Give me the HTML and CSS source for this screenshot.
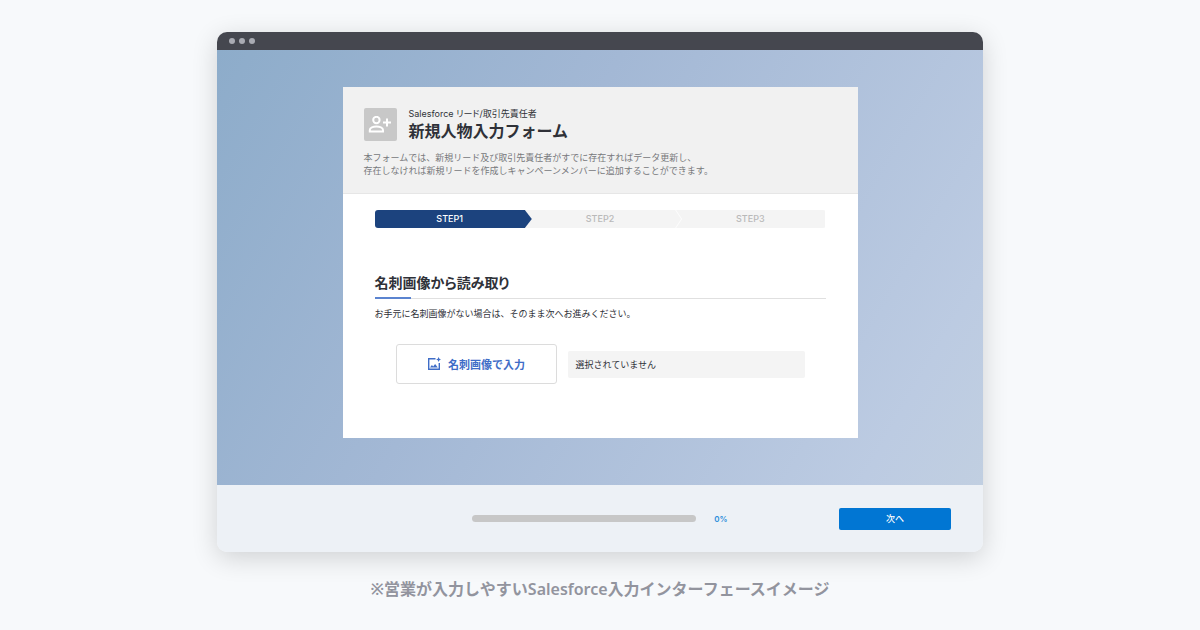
FILE: index.html
```html
<!DOCTYPE html>
<html lang="ja">
<head>
  <meta charset="UTF-8">
  <meta name="viewport" content="width=device-width, initial-scale=1.0">
  <title>新規人物入力フォーム</title>
  <link rel="stylesheet" href="styles.css">
</head>
<body>
  <figure class="figure">
    <div class="window">
      <div class="window-bar">
        <span class="dot"></span>
        <span class="dot"></span>
        <span class="dot"></span>
      </div>

      <main class="stage">
        <section class="card">
          <header class="card-head">
            <div class="title-row">
              <div class="title-icon">
                <svg viewBox="0 0 24 18" width="24" height="18" fill="none" stroke="#fff" stroke-width="2" aria-hidden="true">
                  <circle cx="8.4" cy="4" r="3.2"/>
                  <path d="M1.8 15.4v-1.3c0-2.2 3.4-3.5 6.6-3.5s6.6 1.3 6.6 3.5v1.3z"/>
                  <path d="M19 2.6v8M15 6.6h8"/>
                </svg>
              </div>
              <div>
                <p class="sub-title">Salesforce リード/取引先責任者</p>
                <h1 class="title">新規人物入力フォーム</h1>
              </div>
            </div>
            <p class="lead">本フォームでは、新規リード及び取引先責任者がすでに存在すればデータ更新し、<br>存在しなければ新規リードを作成しキャンペーンメンバーに追加することができます。</p>
          </header>

          <div class="card-body">
            <ol class="steps">
              <li class="step current" aria-current="step">STEP1</li>
              <li class="step">STEP2</li>
              <li class="step">STEP3</li>
            </ol>

            <h2 class="section-title">名刺画像から読み取り</h2>
            <p class="note">お手元に名刺画像がない場合は、そのまま次へお進みください。</p>

            <div class="upload">
              <button type="button" class="upload-button" id="upload">
                <svg viewBox="0 0 14 14" width="14" height="14" aria-hidden="true">
                  <path d="M8.5 1.7H1.7v10.6h10.6V6" fill="none" stroke="#3f6dc7" stroke-width="1.4"/>
                  <path d="M3 10.6l1.9-2.5 1.3 1.5 1.9-2.5 2.7 3.5z" fill="#3f6dc7"/>
                  <path d="M11.6 0l.8 1.8 1.6.7-1.6.8-.8 1.7-.8-1.7-1.7-.8 1.7-.7z" fill="#3f6dc7"/>
                </svg>
                名刺画像で入力
              </button>
              <output class="file-name" for="upload">選択されていません</output>
            </div>
          </div>
        </section>
      </main>

      <footer class="window-foot">
        <div class="progress-box">
          <progress class="progress" id="progress" value="0" max="100" aria-label="進捗"></progress>
          <label class="percent" for="progress">0%</label>
        </div>
        <button type="button" class="next-button">次へ</button>
      </footer>
    </div>
    <figcaption class="caption">※営業が入力しやすいSalesforce入力インターフェースイメージ</figcaption>
  </figure>
</body>
</html>
```
FILE: styles.css
```css
* {
  box-sizing: border-box;
}

body {
  margin: 0;
  background: #f7f9fb;
  color: #2f3138;
  font-family: Inter, "Noto Sans CJK JP", sans-serif;
}

h1, h2, p, ol, figure {
  margin: 0;
  padding: 0;
}

button {
  font: inherit;
  cursor: pointer;
}

.figure {
  padding: 32px 16px 24px;
}

.window {
  max-width: 766px;
  margin: 0 auto;
  border-radius: 10px;
  overflow: hidden;
  box-shadow: 0 6px 26px rgba(0, 0, 0, 0.16);
}

.window-bar {
  display: flex;
  align-items: center;
  gap: 4px;
  height: 18px;
  padding-left: 12px;
  background: #45474f;
}

.dot {
  width: 6px;
  height: 6px;
  border-radius: 50%;
  background: #a9abb3;
}

.stage {
  padding: 37px 16px 47px;
  background: linear-gradient(120deg, #8dacca, #a3b8d5 40%, #bccbe2 88%, #c1cfe1);
}

.card {
  max-width: 515px;
  margin: 0 auto;
  background: #fff;
}

.card-head {
  padding: 20px 21px 16px;
  border-bottom: 1px solid #e6e6e6;
  background: #f1f1f1;
}

.title-row {
  display: flex;
  align-items: center;
  gap: 12px;
}

.title-icon {
  display: flex;
  align-items: center;
  justify-content: center;
  width: 33px;
  height: 33px;
  border-radius: 2px;
  background: #c8c8c8;
}

.sub-title {
  font-size: 9px;
  line-height: 13px;
  font-feature-settings: "palt";
}

.title {
  font-size: 16px;
  line-height: 22px;
}

.lead {
  margin-top: 9px;
  color: #77787b;
  font-size: 9px;
  line-height: 13px;
}

.card-body {
  padding: 16px 32px 54px;
}

.steps {
  display: flex;
  border-radius: 3px;
  overflow: hidden;
  list-style: none;
}

.step {
  position: relative;
  flex: 1;
  background: #f4f4f4;
  color: #b9b9b9;
  font-size: 9px;
  font-weight: 500;
  line-height: 18px;
  text-align: center;
}

/* thin chevron between two steps */
.step:not(:last-child)::after {
  content: "";
  position: absolute;
  top: 0;
  left: 100%;
  z-index: 1;
  width: 7px;
  height: 100%;
  background: #fdfdfd;
  clip-path: polygon(0 0, 1px 0, 100% 50%, 1px 100%, 0 100%, 6px 50%);
}

.step.current {
  background: #1c437e;
  color: #fff;
}

.step.current::after {
  background: #1c437e;
  clip-path: polygon(0 0, 100% 50%, 0 100%);
}

.section-title {
  position: relative;
  margin-top: 45px;
  padding-bottom: 5px;
  border-bottom: 1px solid #e0e0e0;
  font-size: 14px;
  line-height: 20px;
  font-feature-settings: "palt";
}

.section-title::after {
  content: "";
  position: absolute;
  bottom: -1px;
  left: 0;
  width: 36px;
  height: 2px;
  background: #5b84d0;
}

.note {
  margin-top: 8px;
  font-size: 9px;
  line-height: 14px;
}

.upload {
  display: flex;
  align-items: center;
  gap: 11px;
  margin-top: 23px;
  padding: 0 21px;
}

.upload-button {
  display: flex;
  align-items: center;
  justify-content: center;
  gap: 7px;
  width: 161px;
  height: 40px;
  padding: 0;
  border: 1px solid #dcdcdc;
  border-radius: 3px;
  background: #fff;
  color: #3f6dc7;
  font-size: 11px;
  font-weight: 700;
}

.file-name {
  flex: 1;
  padding: 0 8px;
  border-radius: 2px;
  background: #f4f4f4;
  font-size: 9px;
  line-height: 27px;
}

.window-foot {
  display: grid;
  grid-template-columns: 1fr auto 1fr;
  align-items: center;
  height: 67px;
  padding: 0 32px;
  background: #edf1f6;
}

.progress-box {
  display: flex;
  grid-column: 2;
  align-items: center;
  gap: 18px;
}

.progress {
  width: 224px;
  height: 7px;
  border: 0;
  border-radius: 4px;
  background: #c7c7c7;
  overflow: hidden;
  appearance: none;
}

.progress::-webkit-progress-bar {
  background: #c7c7c7;
}

.progress::-webkit-progress-value {
  background: #0176d3;
}

.percent {
  color: #2f8fdb;
  font-size: 8px;
  font-weight: 600;
  line-height: 12px;
}

.next-button {
  justify-self: end;
  width: 112px;
  height: 22px;
  padding: 0;
  border: 0;
  border-radius: 2px;
  background: #0176d3;
  color: #fff;
  font-size: 9px;
  font-weight: 500;
}

.caption {
  margin-top: 25px;
  color: #92949e;
  font-family: "Noto Sans", "Noto Sans CJK JP", sans-serif;
  font-size: 16px;
  font-weight: 600;
  line-height: 24px;
  text-align: center;
}
```
